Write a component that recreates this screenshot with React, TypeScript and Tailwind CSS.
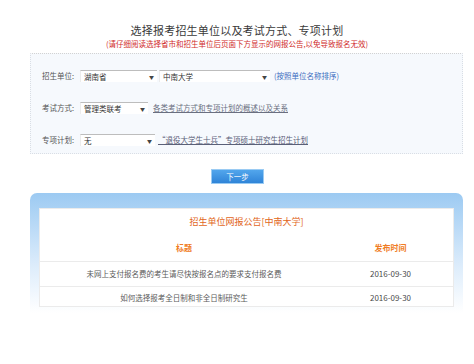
import React from "react";

function Select({ value, width }: { value: string; width: string }) {
  return (
    <div
      className={`${width} h-[12px] bg-white border-t border-[#bdbdbd] border-l border-l-[#ececec] flex items-center justify-between pl-[3px] pr-[3px]`}
    >
      <span className="text-[7.5px] leading-none text-[#333]">{value}</span>
      <span className="text-[5px] leading-none text-[#444]">▼</span>
    </div>
  );
}

function FormRow({ label, children }: { label: string; children: React.ReactNode }) {
  return (
    <div className="flex items-center h-[12px]">
      <span className="w-[38px] text-[7.5px] leading-none text-[#555]">{label}</span>
      {children}
    </div>
  );
}

const notices = [
  { title: "未网上支付报名费的考生请尽快按报名点的要求支付报名费", date: "2016-09-30" },
  { title: "如何选择报考全日制和非全日制研究生", date: "2016-09-30" },
];

export default function App() {
  return (
    <div
      className="w-[474px] h-[364px] bg-white overflow-hidden"
      style={{ fontFamily: '"Noto Sans CJK SC", "Noto Sans", sans-serif' }}
    >
      <h1 className="pt-[23px] text-center text-[11px] leading-[14px] text-[#3a3a3a] tracking-[0.2px]">
        选择报考招生单位以及考试方式、专项计划
      </h1>
      <p className="mt-[2px] text-center text-[7.5px] leading-[10px] text-[#d02a2a]">
        (请仔细阅读选择省市和招生单位后页面下方显示的网报公告,以免导致报名无效)
      </p>

      {/* form panel */}
      <div className="mt-[4px] ml-[30px] w-[433px] h-[101px] bg-[#f6f9fd] border-t border-dashed border-t-[#d2d2d2] border-x border-b border-dotted border-[#d9dee5] pl-[11px] pt-[16px] flex flex-col gap-[20px]">
        <FormRow label="招生单位:">
          <Select value="湖南省" width="w-[77px]" />
          <div className="w-[2px]" />
          <Select value="中南大学" width="w-[111px]" />
          <span className="ml-[4px] text-[7.5px] leading-none text-[#3a6cc0]">(按照单位名称排序)</span>
        </FormRow>
        <FormRow label="考试方式:">
          <Select value="管理类联考" width="w-[68px]" />
          <span className="ml-[5px] text-[7.5px] leading-none text-[#6a6f80] underline">
            各类考试方式和专项计划的概述以及关系
          </span>
        </FormRow>
        <FormRow label="专项计划:">
          <Select value="无" width="w-[75px]" />
          <span className="ml-[3px] text-[7.5px] leading-none text-[#5a6078] underline">
            “退役大学生士兵”专项硕士研究生招生计划
          </span>
        </FormRow>
      </div>

      <div className="flex justify-center mt-[15px] pl-[1px]">
        <button className="w-[53px] h-[15px] bg-gradient-to-b from-[#52a6ec] to-[#2f84d8] border border-[#9acbf3] text-white text-[7.5px] leading-none">
          下一步
        </button>
      </div>

      {/* notice frame */}
      <div className="mt-[9px] ml-[30px] w-[433px] rounded-t-[7px] bg-gradient-to-b from-[#9ccaf2] via-[#dcecfb] via-60% to-white px-[9px] pt-[15px] pb-[6px]">
        <div className="bg-white border border-[#ebebeb]">
          <div className="h-[26px] flex items-center justify-center text-[9px] text-[#e2661a]">
            招生单位网报公告[中南大学]
          </div>
          <div className="flex h-[27px] items-center border-b border-[#ebebeb] text-[8px] font-bold text-[#f07c24]">
            <div className="w-[288px] text-center">标题</div>
            <div className="flex-1 text-center">发布时间</div>
          </div>
          {notices.map((n, i) => (
            <div
              key={i}
              className={`flex items-center text-[7.5px] text-[#5a5a5a] ${i === 0 ? "h-[25px] border-b border-[#ebebeb]" : "h-[19px] pt-[2px]"}`}
            >
              <div className="w-[288px] text-center">{n.title}</div>
              <div className="flex-1 text-center text-[8px] text-[#4a4a4a]">{n.date}</div>
            </div>
          ))}
        </div>
      </div>
    </div>
  );
}
